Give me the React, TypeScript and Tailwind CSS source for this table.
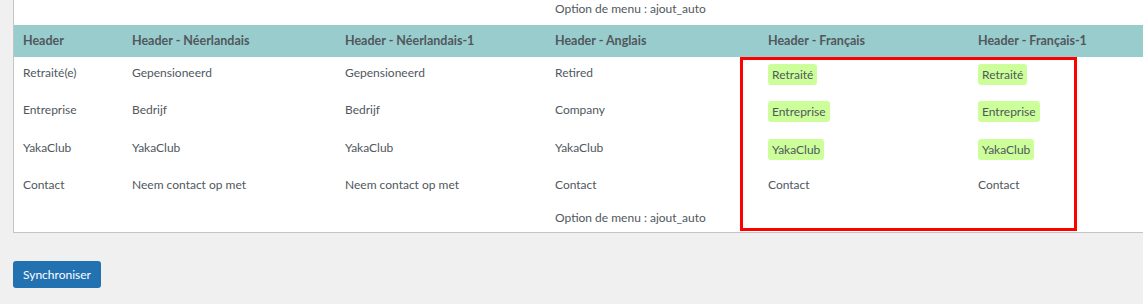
import React from "react";

type Cell = string | { tag: string };

const cols = ["w-[109px]", "w-[213px]", "w-[210px]", "w-[213px]", "w-[210px]", "flex-1"];

const headers = [
  "Header",
  "Header - Néerlandais",
  "Header - Néerlandais-1",
  "Header - Anglais",
  "Header - Français",
  "Header - Français-1",
];

const rows: { h: string; pt: string; cells: Cell[] }[] = [
  {
    h: "h-[37px]",
    pt: "pt-[7px]",
    cells: ["Retraité(e)", "Gepensioneerd", "Gepensioneerd", "Retired", { tag: "Retraité" }, { tag: "Retraité" }],
  },
  {
    h: "h-[38px]",
    pt: "pt-[7px]",
    cells: ["Entreprise", "Bedrijf", "Bedrijf", "Company", { tag: "Entreprise" }, { tag: "Entreprise" }],
  },
  {
    h: "h-[37px]",
    pt: "pt-[7px]",
    cells: ["YakaClub", "YakaClub", "YakaClub", "YakaClub", { tag: "YakaClub" }, { tag: "YakaClub" }],
  },
  {
    h: "h-[38px]",
    pt: "pt-[7px]",
    cells: ["Contact", "Neem contact op met", "Neem contact op met", "Contact", "Contact", "Contact"],
  },
  {
    h: "h-[25px]",
    pt: "pt-[2px]",
    cells: ["", "", "", "Option de menu : ajout_auto", "", ""],
  },
];

const Tag = ({ label }: { label: string }) => (
  <span className="inline-block rounded-[3px] bg-[#ccff99] px-1 py-[2px] leading-[17px]">{label}</span>
);

export default function App() {
  return (
    <div
      className="min-h-[304px] w-[1143px] overflow-hidden bg-[#f0f0f1] text-[12px] leading-[18px] text-[#50575e]"
      style={{ fontFamily: 'Lato, "Noto Sans", sans-serif' }}
    >
      <div className="ml-[13px] w-[1200px] border-b border-l border-[#c3c4c7] bg-white">
        <div className="relative">
          {/* tail of the previous table */}
          <div className="flex h-[25px]">
            {cols.map((c, i) => (
              <div key={i} className={`${c} pl-[9px] pr-[11px]`}>
                {i === 3 ? "Option de menu : ajout_auto" : ""}
              </div>
            ))}
          </div>

          <div className="flex h-[32px] items-center bg-[#99cccc] text-[12.5px] font-bold">
            {headers.map((h, i) => (
              <div key={i} className={`${cols[i]} pl-[9px] pr-[11px] whitespace-nowrap`}>
                {h}
              </div>
            ))}
          </div>

          {rows.map((r, ri) => (
            <div key={ri} className={`flex ${r.h}`}>
              {r.cells.map((c, ci) => (
                <div key={ci} className={`${cols[ci]} pl-[9px] pr-[11px] ${r.pt} whitespace-nowrap`}>
                  {typeof c === "string" ? c : <Tag label={c.tag} />}
                </div>
              ))}
            </div>
          ))}

          {/* highlight frame around the French columns */}
          <div className="pointer-events-none absolute left-[726px] top-[57px] h-[174px] w-[337px] border-[3px] border-[#ff0000]" />
        </div>
      </div>

      <div className="px-[13px] pt-[28px]">
        <button className="h-[27px] rounded-[3px] bg-[#2271b1] px-[10px] text-[12px] text-white">
          Synchroniser
        </button>
      </div>
    </div>
  );
}
